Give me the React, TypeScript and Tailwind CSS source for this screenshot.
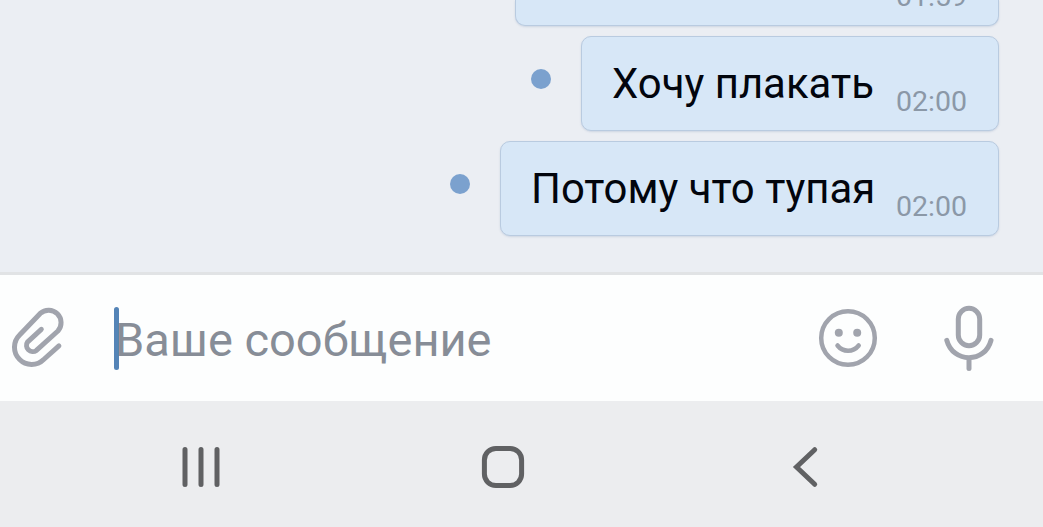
type Message = {
  text: string;
  time: string;
  width: string;
};

const messages: Message[] = [
  { text: "Хочу плакать", time: "02:00", width: "w-[418px]" },
  { text: "Потому что тупая", time: "02:00", width: "w-[499px]" },
];

const bubble =
  "relative border border-[#b9cbe0] bg-[#d7e7f7] shadow-[0_1px_2px_rgba(120,145,180,0.25)]";

function MessageRow({ message }: { message: Message }) {
  return (
    <div className="flex h-[95px] shrink-0 justify-end">
      <span className="mt-[33px] mr-[30px] h-5 w-5 rounded-full bg-[#7ba1ce]" />
      <div
        className={`${bubble} ${message.width} flex items-baseline justify-between rounded-[10px] pt-[22px] pr-[31px] pl-[30px] whitespace-nowrap`}
      >
        <span className="text-[41.9px] leading-[50px] text-[#02050d]">{message.text}</span>
        <span className="relative top-[13px] text-[28.5px] leading-[34px] text-[#8b98a7]">
          {message.time}
        </span>
      </div>
    </div>
  );
}

function PaperclipIcon() {
  return (
    <svg width="56" height="64" viewBox="10 306 56 64" fill="none" className="shrink-0">
      <path
        d="M58.9 345.8 43.7 359.5A17.1 17.1 0 0 1 19.6 335L40.2 313.4A12.5 12.5 0 0 1 57.9 331L36.4 350.4A6.2 6.2 0 0 1 27.7 341.8L41.3 329.3"
        stroke="#a1a4ad"
        strokeWidth="5"
        strokeLinecap="round"
        strokeLinejoin="round"
      />
    </svg>
  );
}

function SmileIcon() {
  return (
    <svg width="60" height="60" viewBox="818 308 60 60" fill="none" className="shrink-0">
      <circle cx="848" cy="338" r="26.8" stroke="#a1a4ad" strokeWidth="4.5" />
      <circle cx="838.8" cy="332.7" r="4" fill="#a1a4ad" />
      <circle cx="857.2" cy="332.7" r="4" fill="#a1a4ad" />
      <path
        d="M837.5 345.5C843 352.5 853 352.5 858.7 345.5"
        stroke="#a1a4ad"
        strokeWidth="4.5"
        strokeLinecap="round"
      />
    </svg>
  );
}

function MicIcon() {
  return (
    <svg width="52" height="68" viewBox="943 304 52 68" fill="none" className="shrink-0">
      <rect x="958.3" y="308.3" width="21.4" height="37.4" rx="10.7" stroke="#a1a4ad" strokeWidth="5" />
      <path
        d="M946.8 340.3C953 363.5 985 363.5 991 340.3M969 358V368.5"
        stroke="#a1a4ad"
        strokeWidth="5"
        strokeLinecap="round"
      />
    </svg>
  );
}

function Composer() {
  return (
    <div className="flex h-[129px] shrink-0 items-center border-t-[3px] border-[#e1e3e5] bg-[#fdfefe] pr-[48px] pl-[10px]">
      <PaperclipIcon />
      <span className="ml-[48px] h-[63px] w-[5px] shrink-0 rounded-full bg-[#5484b7]" />
      <span className="relative z-0 -ml-[4px] flex-1 pt-1 text-[47px] leading-[54px] whitespace-nowrap text-[#878d97]">
        Ваше сообщение
      </span>
      <SmileIcon />
      <span className="w-[65px] shrink-0" />
      <MicIcon />
    </div>
  );
}

function NavBar() {
  return (
    <div className="flex h-[126px] shrink-0 items-start bg-[#ecedef] pt-[43px] pl-[180px]">
      <svg width="42" height="46" viewBox="180 444 42 46" fill="none">
        <path
          d="M185 449.5V484.5M201 449.5V484.5M217 449.5V484.5"
          stroke="#606163"
          strokeWidth="5"
          strokeLinecap="round"
        />
      </svg>
      <svg width="46" height="46" viewBox="480 444 46 46" fill="none" className="ml-[258px]">
        <rect x="484.4" y="448.4" width="37.2" height="37.2" rx="11.5" stroke="#606163" strokeWidth="5" />
      </svg>
      <svg width="30" height="46" viewBox="790 444 30 46" fill="none" className="ml-[264px]">
        <path d="M814.7 449.7 796.5 467 814.7 484.3" stroke="#606163" strokeWidth="5" strokeLinecap="round" />
      </svg>
    </div>
  );
}

export default function App() {
  return (
    <div className="flex h-[527px] w-[1043px] flex-col overflow-hidden bg-[#ebeef3] font-[Roboto,sans-serif]">
      <div className="flex h-[272px] shrink-0 flex-col gap-[10px] pr-[44px]">
        <div className="flex h-[26px] shrink-0 items-end justify-end">
          <div className={`${bubble} flex h-[26px] w-[484px] items-end justify-end rounded-b-[10px] border-t-0 pr-[31px] pb-[11px]`}>
            <span className="text-[28.5px] leading-[34px] text-[#8b98a7]">01:59</span>
          </div>
        </div>
        {messages.map((message) => (
          <MessageRow key={message.text} message={message} />
        ))}
      </div>
      <Composer />
      <NavBar />
    </div>
  );
}
